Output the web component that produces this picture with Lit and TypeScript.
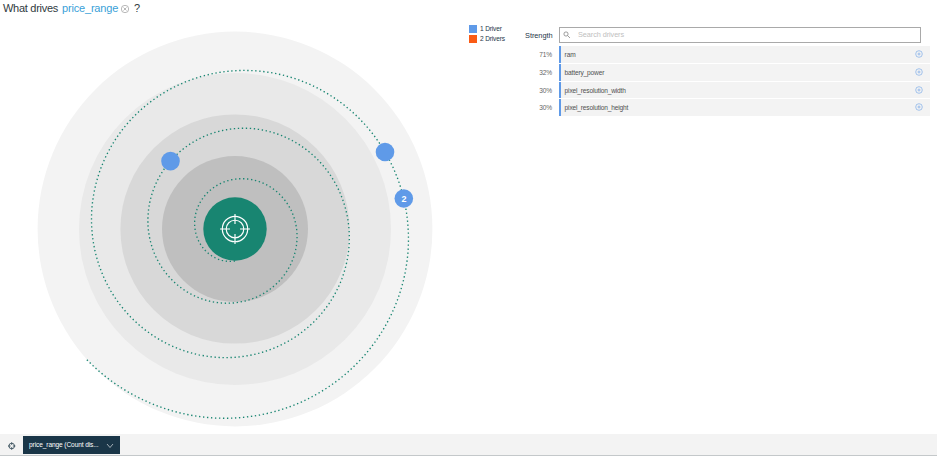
import { LitElement, html, svg, css } from "lit";
import { customElement } from "lit/decorators.js";

const CX = 235;
const CY = 205;

const rings = [
  { r: 197.4, fill: "#f3f3f3" },
  { r: 156, fill: "#e9e9e9" },
  { r: 114.6, fill: "#d8d8d8" },
  { r: 73, fill: "#bfbfbf" },
  { r: 31.7, fill: "#188571" },
];

// Spiral radius at each quarter turn, starting below the centre and running clockwise.
const radii = [32, 40, 49.8, 61.6, 73.8, 86.7, 100.4, 114, 128.3, 143.2, 158.3, 173.2, 189, 205];
const END = 12.543;

function radiusAt(t: number): number {
  const i = Math.min(Math.floor(t), radii.length - 2);
  const f = t - i;
  const b = radii[i];
  const c = radii[i + 1];
  const a = i > 0 ? radii[i - 1] : 2 * b - c;
  const d = i + 2 < radii.length ? radii[i + 2] : 2 * c - b;
  return b + 0.5 * f * (c - a + f * (2 * a - 5 * b + 4 * c - d + f * (3 * (b - c) + d - a)));
}

function spiralPath(): string {
  const points: string[] = [];
  for (let n = 0; n <= 500; n++) {
    const t = (END * n) / 500;
    const angle = ((t + 1) * Math.PI) / 2;
    const r = radiusAt(t);
    points.push(`${(CX + r * Math.cos(angle)).toFixed(2)},${(CY + r * Math.sin(angle)).toFixed(2)}`);
  }
  return "M" + points.join("L");
}

const nodes = [
  { x: 170.5, y: 137.1, label: "" },
  { x: 385, y: 128, label: "" },
  { x: 403.8, y: 174.5, label: "2" },
];

const drivers = [
  { strength: "71%", name: "ram" },
  { strength: "32%", name: "battery_power" },
  { strength: "30%", name: "pixel_resolution_width" },
  { strength: "30%", name: "pixel_resolution_height" },
];

@customElement("app-root")
export class AppRoot extends LitElement {
  static styles = css`
    :host {
      display: flex;
      flex-direction: column;
      width: 937px;
      height: 456px;
      box-sizing: border-box;
      overflow: hidden;
      background: #fff;
      color: #394b54;
      font: 6.6px/8px "Liberation Sans", Arial, sans-serif;
      letter-spacing: -0.17px;
      border-bottom: 1px solid #c4c8ca;
    }
    svg { display: block; }
    header {
      height: 24px;
      padding: 1px 0 0 3px;
      box-sizing: border-box;
      display: flex;
      align-items: flex-start;
      font-size: 11px;
      line-height: 14px;
      color: #303a40;
    }
    .what { width: 59px; letter-spacing: -0.28px; white-space: nowrap; }
    .target { width: 56px; color: #3a9fd8; letter-spacing: -0.18px; }
    .clear { margin: 4px 5px 0 3px; }
    main { display: flex; height: 410px; }
    .chart { flex: none; width: 469px; }
    .count { font: bold 9px "Liberation Sans", Arial, sans-serif; fill: #fff; text-anchor: middle; }
    .legend { width: 52px; display: flex; flex-direction: column; gap: 2px; padding-top: 1px; color: #1d3649; }
    .key { display: flex; gap: 3px; height: 8px; line-height: 8px; white-space: nowrap; }
    .swatch { width: 8px; height: 8px; }
    .one { background: #5f9ae8; }
    .two { background: #fa5b15; }
    .panel { width: 409px; padding-top: 3px; }
    .top { display: flex; height: 19px; }
    .heading { width: 38px; padding: 5px 0 0 4px; box-sizing: border-box; font-size: 7.4px; line-height: 8px; letter-spacing: -0.05px; color: #1d3649; }
    .search {
      width: 362px; height: 16px; box-sizing: border-box; border: 1px solid #a9a9a9;
      display: flex; align-items: center; padding-left: 3px; gap: 7px;
      font-size: 7.3px; letter-spacing: -0.07px; color: #c0c0c0;
    }
    .row { display: flex; height: 17.8px; }
    .pct { width: 31px; padding-right: 7px; text-align: right; line-height: 18px; color: #666; }
    .bar {
      flex: 1; height: 16.8px; box-sizing: border-box; display: flex; justify-content: space-between;
      padding: 0 7px 0 4px; background: #f3f3f3; border-left: 2px solid #5f9ae8; line-height: 17px; color: #505050;
      margin-left: -0.4px;
    }
    .add { margin-top: 4px; }
    footer { height: 21px; background: #f3f3f3; display: flex; }
    .aim { margin: 8px 7px 0 8px; }
    .select {
      margin-top: 2px; width: 97.4px; height: 18px; box-sizing: border-box; padding: 0 6px;
      display: flex; justify-content: space-between; align-items: center;
      background: #1a3648; color: #fff; letter-spacing: -0.11px;
    }
    .chev { margin-top: 2px; }
  `;

  render() {
    return html`
      <header>
        <span class="what">What drives</span><span class="target">price_range</span>
        <svg class="clear" width="8" height="8" viewBox="0 0 8 8" fill="none" stroke="#888" stroke-width=".6">
          <circle cx="4" cy="4" r="3.7" /><path d="M2.5 2.5L5.5 5.5M5.5 2.5L2.5 5.5" />
        </svg>
        <span>?</span>
      </header>
      <main>
        <svg class="chart" width="469" height="410" viewBox="0 0 469 410">
          ${rings.map((c) => svg`<circle cx=${CX} cy=${CY} r=${c.r} fill=${c.fill} />`)}
          <path d=${spiralPath()} fill="none" stroke="#188571" stroke-width="1.35" stroke-dasharray="1.35 2.65" />
          <g fill="none" stroke="#fff" stroke-width="1.15">
            <circle cx=${CX} cy=${CY} r="12.7" /><circle cx=${CX} cy=${CY} r="8.8" />
            <path d="M235 190v10M235 210v10M220 205h10M240 205h10" />
          </g>
          ${nodes.map(
            (n) => svg`<circle cx=${n.x} cy=${n.y} r="9.3" fill="#5f9ae8" />
              <text class="count" x=${n.x} y=${n.y + 3.5}>${n.label}</text>`
          )}
        </svg>
        <div class="legend">
          <div class="key"><span class="swatch one"></span>1 Driver</div>
          <div class="key"><span class="swatch two"></span>2 Drivers</div>
        </div>
        <div class="panel">
          <div class="top">
            <div class="heading">Strength</div>
            <div class="search">
              <svg width="8" height="8" viewBox="0 0 8 8" fill="none" stroke="#777" stroke-width=".7">
                <circle cx="3" cy="3" r="2.1" /><path d="M4.6 4.6L7 7" />
              </svg>
              <span>Search drivers</span>
            </div>
          </div>
          ${drivers.map(
            (d) => html`<div class="row">
              <div class="pct">${d.strength}</div>
              <div class="bar">
                <span>${d.name}</span>
                <svg class="add" width="8" height="8" viewBox="0 0 8 8" fill="none" stroke="#6da2e8" stroke-width=".6">
                  <circle cx="4" cy="4" r="3.3" /><path d="M4 2.5v3M2.5 4h3" />
                </svg>
              </div>
            </div>`
          )}
        </div>
      </main>
      <footer>
        <svg class="aim" width="8" height="8" viewBox="0 0 8 8" fill="none" stroke="#263f4c" stroke-width=".8">
          <circle cx="3.7" cy="4" r="2.8" /><path d="M3.7 .3v2.6M3.7 5.1v2.6M0 4h2.6M4.8 4h2.6" />
        </svg>
        <div class="select">
          <span>price_range (Count dis...</span>
          <svg class="chev" width="8" height="6" viewBox="0 0 8 6" fill="none" stroke="#fff" stroke-width=".6">
            <path d="M1 1l3 3.5L7 1" />
          </svg>
        </div>
      </footer>
    `;
  }
}
